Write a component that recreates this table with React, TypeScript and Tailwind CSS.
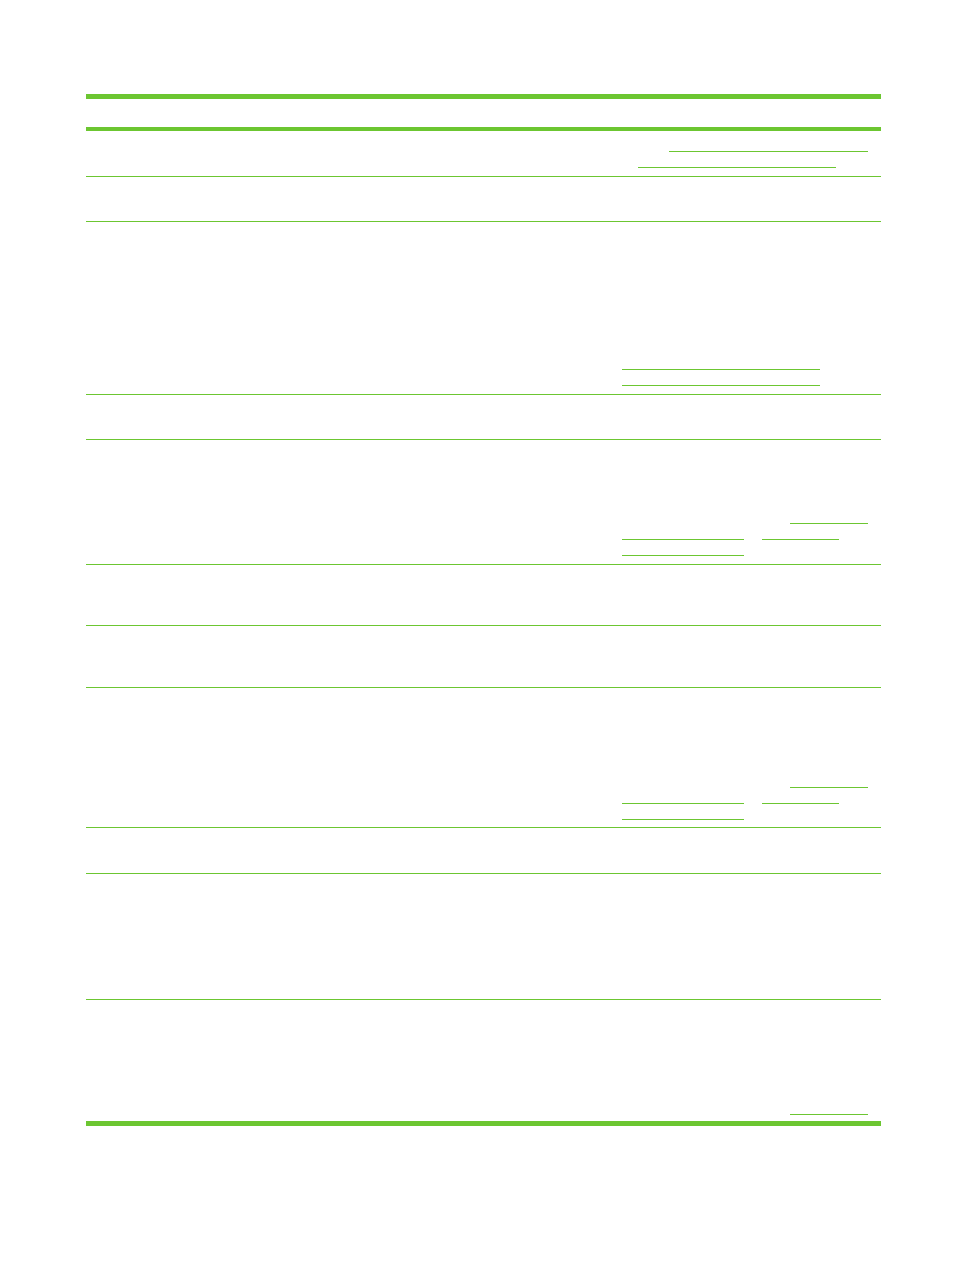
import React from "react";

// line colour used for every rule and link underline
const GREEN = "border-[#6cc631]";

type Link = { ml: number; w: number };
type LinkLine = Link[];

type Row = {
  h: number;
  pb?: number;
  links?: LinkLine[];
  last?: boolean;
};

const rows: Row[] = [
  { h: 46, pb: 8, links: [[{ ml: 53, w: 199 }], [{ ml: 22, w: 198 }]] },
  { h: 45 },
  { h: 173, pb: 8, links: [[{ ml: 6, w: 198 }], [{ ml: 6, w: 198 }]] },
  { h: 45 },
  {
    h: 125,
    pb: 8,
    links: [
      [{ ml: 174, w: 78 }],
      [{ ml: 6, w: 122 }, { ml: 18, w: 77 }],
      [{ ml: 6, w: 122 }],
    ],
  },
  { h: 61 },
  { h: 62 },
  {
    h: 140,
    pb: 7,
    links: [
      [{ ml: 174, w: 78 }],
      [{ ml: 6, w: 122 }, { ml: 18, w: 77 }],
      [{ ml: 6, w: 122 }],
    ],
  },
  { h: 46 },
  { h: 126 },
  { h: 121, pb: 6, links: [[{ ml: 174, w: 78 }]], last: true },
];

function LinkCell({ lines, pb }: { lines?: LinkLine[]; pb?: number }) {
  return (
    <div className="flex flex-col justify-end" style={{ paddingBottom: pb ?? 0 }}>
      {lines?.map((line, i) => (
        <div key={i} className="flex h-[16px] items-end">
          {line.map((l, j) => (
            <span
              key={j}
              className={`block h-[2px] border-b ${GREEN}`}
              style={{ marginLeft: l.ml, width: l.w }}
            />
          ))}
        </div>
      ))}
    </div>
  );
}

export default function App() {
  return (
    <div className="min-h-[1270px] bg-white pt-[94px] font-['Liberation_Sans',Arial,sans-serif] text-[11px] text-white">
      <div className="ml-[86px] w-[795px]">
        {/* top rule */}
        <div className="h-[5px] bg-[#6cc631]" />

        {/* header row */}
        <div className={`grid h-[32px] grid-cols-[266px_264px_265px] border-b-4 ${GREEN}`}>
          <div />
          <div />
          <div />
        </div>

        {rows.map((r, i) => (
          <div
            key={i}
            className={`grid grid-cols-[266px_264px_265px] ${r.last ? "" : `border-b ${GREEN}`}`}
            style={{ height: r.h }}
          >
            <div />
            <div />
            <LinkCell lines={r.links} pb={r.pb} />
          </div>
        ))}

        {/* bottom rule */}
        <div className="h-[5px] bg-[#6cc631]" />
      </div>
    </div>
  );
}
